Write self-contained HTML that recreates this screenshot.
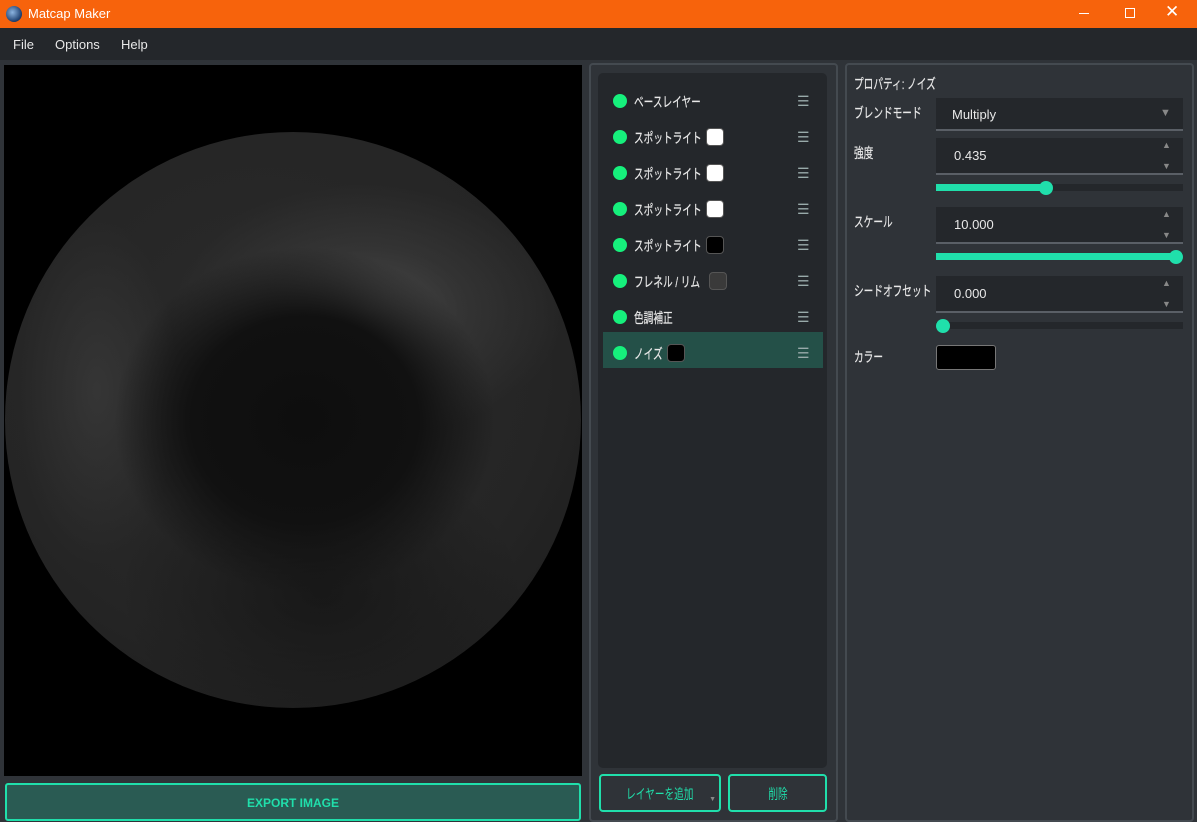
<!DOCTYPE html><html><head><meta charset="utf-8"><style>
*{margin:0;padding:0;box-sizing:border-box}
body{width:1197px;height:822px;overflow:hidden;background:#2f3338;font-family:"Liberation Sans","Noto Sans CJK JP",sans-serif;color:#e8e8e8;font-size:13px;position:relative}
.a{position:absolute}
.j{font-size:14px;line-height:16px;white-space:nowrap;transform:scaleX(.69);transform-origin:0 50%;-webkit-text-stroke:.2px #e8e8e8}
.jc{font-size:14px;display:inline-block;transform:scaleX(.69)}
.title{left:0;top:0;width:1197px;height:28px;background:#f7630c;color:#fff}
.menu{left:0;top:28px;width:1197px;height:32px;background:#24272b}
.dot{width:14px;height:14px;border-radius:50%;background:#16f07c}
.row{left:603px;width:220px;height:36px}
.sw{width:18px;height:18px;border-radius:4px;border:1px solid #555}
.ham{color:#9aa;font-size:14px}
.field{background:#24272b;border-bottom:2px solid #5a5f66;left:936px;width:247px}
.track{left:936px;width:247px;height:7px;background:#24272b}
.fill{height:7px;background:#20dfab}
.knob{width:14px;height:14px;border-radius:50%;background:#20dfab}
.arr{color:#888;font-size:9px;left:1162px}
</style></head><body>
<div class="a title"><div class="a" style="left:6px;top:6px;width:16px;height:16px;border-radius:50%;background:radial-gradient(circle at 40% 40%,#8cb4e0,#1b3c6c 70%,#222)"></div><div class="a" style="left:28px;top:6px;font-size:13px">Matcap Maker</div>
<div class="a" style="left:1079px;top:13px;width:10px;height:1px;background:#fff"></div>
<div class="a" style="left:1125px;top:8px;width:10px;height:10px;border:1px solid #fff"></div>
<div class="a" style="left:1165px;top:2px;font-size:17px">✕</div></div>
<div class="a menu"><span class="a" style="left:13px;top:9px">File</span><span class="a" style="left:55px;top:9px">Options</span><span class="a" style="left:121px;top:9px">Help</span></div>
<div class="a" style="left:4px;top:65px;width:578px;height:711px;background:#000;overflow:hidden">
<div class="a" style="left:1px;top:67px;width:576px;height:576px;border-radius:50%;background:
radial-gradient(ellipse 33% 30% at 52% 50%,#0e0e0e 0%,#111 60%,rgba(18,18,18,0) 100%),
radial-gradient(ellipse 34% 22% at 63% 31%,rgba(95,95,95,.6) 0%,rgba(80,80,80,.3) 50%,rgba(60,60,60,0) 100%),
radial-gradient(ellipse 14% 30% at 16% 45%,rgba(75,75,75,.4) 0%,rgba(60,60,60,0) 100%),
radial-gradient(ellipse 35% 25% at 55% 80%,rgba(10,10,10,.5) 0%,rgba(10,10,10,0) 100%),
radial-gradient(circle at 45% 40%,#2a2a2a 0%,#252525 60%,#1c1c1c 92%,#222 100%)"></div>
</div>
<div class="a" style="left:5px;top:783px;width:576px;height:38px;background:#2a5b53;border:2px solid #20dfab;border-radius:3px;color:#20dfab;font-weight:bold;font-size:12px;text-align:center;line-height:36px">EXPORT IMAGE</div>
<div class="a" style="left:589px;top:63px;width:249px;height:759px;border:2px solid #444a50;border-radius:4px"></div>
<div class="a" style="left:598px;top:73px;width:229px;height:695px;background:#24272b;border-radius:5px"></div>
<div class="a row" style="top:332px;background:#245048"></div>
<div id="rows"></div>
<div class="a" style="left:599px;top:774px;width:122px;height:38px;border:2px solid #20dfab;border-radius:4px;color:#20dfab;text-align:center;line-height:36px"><span class="jc">レイヤーを追加</span><span class="a" style="right:3px;top:6px;font-size:7px;color:#888">▼</span></div>
<div class="a" style="left:728px;top:774px;width:99px;height:38px;border:2px solid #20dfab;border-radius:4px;color:#20dfab;text-align:center;line-height:36px"><span class="jc">削除</span></div>
<div class="a" style="left:845px;top:63px;width:349px;height:759px;border:2px solid #444a50;border-radius:4px"></div>
<div class="a j" style="left:854px;top:76px">プロパティ: ノイズ</div>
<div class="a j" style="left:854px;top:105px">ブレンドモード</div>
<div class="a field" style="top:98px;height:33px"><span class="a" style="left:16px;top:9px">Multiply</span><span class="a" style="left:224px;top:9px;color:#888;font-size:11px">▼</span></div>
<div class="a j" style="left:854px;top:145px">強度</div>
<div class="a field" style="top:138px;height:37px"><span class="a" style="left:18px;top:10px">0.435</span></div>
<span class="a arr" style="top:140px">▲</span><span class="a arr" style="top:161px">▼</span>
<div class="a track" style="top:184px"><div class="fill" style="width:110px"></div></div><div class="a knob" style="left:1039px;top:181px"></div>
<div class="a j" style="left:854px;top:214px">スケール</div>
<div class="a field" style="top:207px;height:37px"><span class="a" style="left:18px;top:10px">10.000</span></div>
<span class="a arr" style="top:209px">▲</span><span class="a arr" style="top:230px">▼</span>
<div class="a track" style="top:253px"><div class="fill" style="width:240px"></div></div><div class="a knob" style="left:1169px;top:250px"></div>
<div class="a j" style="left:854px;top:283px">シードオフセット</div>
<div class="a field" style="top:276px;height:37px"><span class="a" style="left:18px;top:10px">0.000</span></div>
<span class="a arr" style="top:278px">▲</span><span class="a arr" style="top:299px">▼</span>
<div class="a track" style="top:322px"></div><div class="a knob" style="left:936px;top:319px"></div>
<div class="a j" style="left:854px;top:349px">カラー</div>
<div class="a" style="left:936px;top:345px;width:60px;height:25px;background:#000;border:1px solid #777;border-radius:3px"></div>
<script>
var d=[["ベースレイヤー",null,0],["スポットライト","#fff",706],["スポットライト","#fff",706],["スポットライト","#fff",706],["スポットライト","#000",706],["フレネル / リム","#3a3a3a",709],["色調補正",null,0],["ノイズ","#000",667]],h="";
d.forEach(function(r,i){var y=84+i*36;
h+='<div class="a dot" style="left:613px;top:'+(y+10)+'px"></div><span class="a j" style="left:634px;top:'+(y+10)+'px">'+r[0]+'</span>';
if(r[1])h+='<div class="a sw" style="left:'+r[2]+'px;top:'+(y+8)+'px;background:'+r[1]+'"></div>';
h+='<span class="a ham" style="left:797px;top:'+(y+9)+'px">☰</span>';});
document.getElementById("rows").innerHTML=h;
</script>
</body></html>
